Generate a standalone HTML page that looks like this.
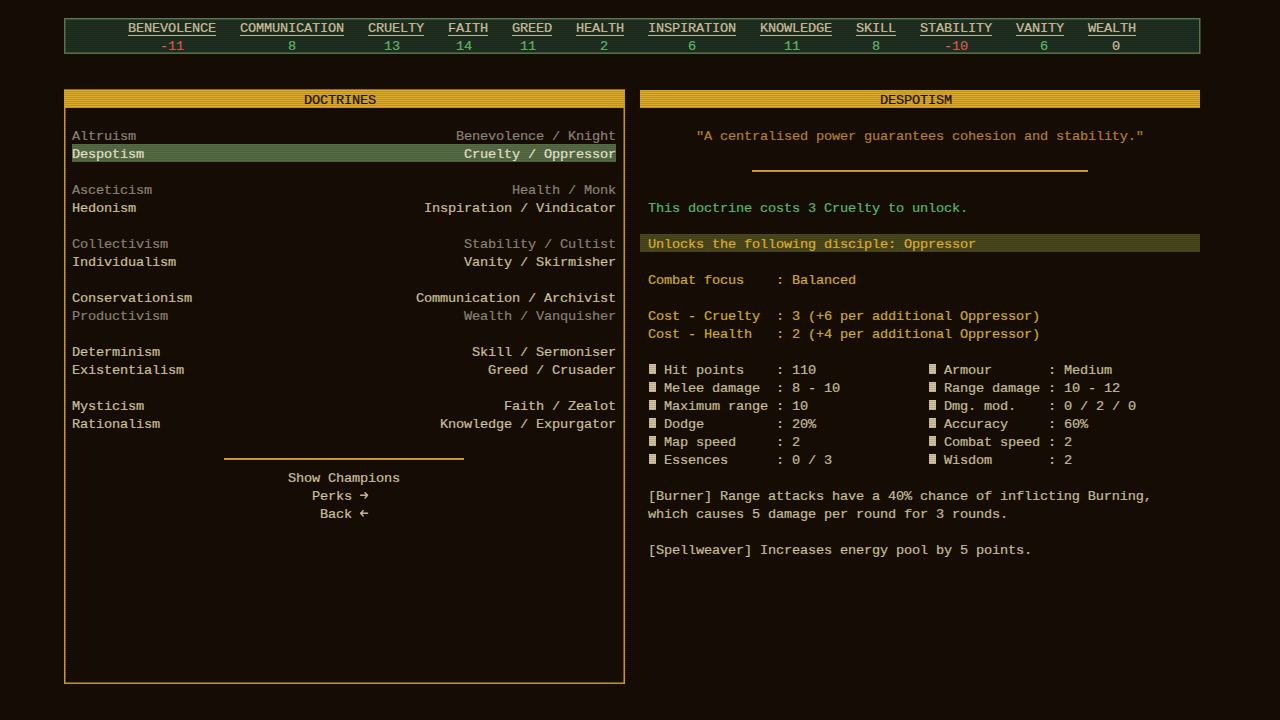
<!DOCTYPE html>
<html><head><meta charset="utf-8"><style>
html,body{margin:0;padding:0;width:1280px;height:720px;overflow:hidden;background:#160d04;}
body{position:relative;font-family:"Liberation Mono",monospace;font-size:13.6px;letter-spacing:-0.160px;line-height:18px;font-weight:normal;}
.t{position:absolute;white-space:pre;height:18px;padding-top:2px;-webkit-text-stroke:0.22px currentColor;}
.r{position:absolute;}
.scan{position:absolute;left:0;top:0;width:1280px;height:720px;background:repeating-linear-gradient(to bottom,rgba(0,0,0,0) 0px,rgba(0,0,0,0) 1px,rgba(0,0,0,0.12) 1px,rgba(0,0,0,0.12) 2px);pointer-events:none;}
</style></head><body>
<svg class="r" style="left:0;top:0" width="1280" height="720"><rect x="64.75" y="18.75" width="1135" height="34.5" fill="#1f2f21" stroke="#5d7b52" stroke-width="1.5"/></svg>
<div class="t" style="left:128px;top:18px;color:#d9c8a0;">BENEVOLENCE</div>
<div class="r" style="left:128px;top:35px;width:88px;height:1px;background:#d9c8a0;"></div>
<div class="t" style="left:160px;top:36px;color:#dc5f50;">-11</div>
<div class="t" style="left:240px;top:18px;color:#d9c8a0;">COMMUNICATION</div>
<div class="r" style="left:240px;top:35px;width:104px;height:1px;background:#d9c8a0;"></div>
<div class="t" style="left:288px;top:36px;color:#64bf69;">8</div>
<div class="t" style="left:368px;top:18px;color:#d9c8a0;">CRUELTY</div>
<div class="r" style="left:368px;top:35px;width:56px;height:1px;background:#d9c8a0;"></div>
<div class="t" style="left:384px;top:36px;color:#64bf69;">13</div>
<div class="t" style="left:448px;top:18px;color:#d9c8a0;">FAITH</div>
<div class="r" style="left:448px;top:35px;width:40px;height:1px;background:#d9c8a0;"></div>
<div class="t" style="left:456px;top:36px;color:#64bf69;">14</div>
<div class="t" style="left:512px;top:18px;color:#d9c8a0;">GREED</div>
<div class="r" style="left:512px;top:35px;width:40px;height:1px;background:#d9c8a0;"></div>
<div class="t" style="left:520px;top:36px;color:#64bf69;">11</div>
<div class="t" style="left:576px;top:18px;color:#d9c8a0;">HEALTH</div>
<div class="r" style="left:576px;top:35px;width:48px;height:1px;background:#d9c8a0;"></div>
<div class="t" style="left:600px;top:36px;color:#64bf69;">2</div>
<div class="t" style="left:648px;top:18px;color:#d9c8a0;">INSPIRATION</div>
<div class="r" style="left:648px;top:35px;width:88px;height:1px;background:#d9c8a0;"></div>
<div class="t" style="left:688px;top:36px;color:#64bf69;">6</div>
<div class="t" style="left:760px;top:18px;color:#d9c8a0;">KNOWLEDGE</div>
<div class="r" style="left:760px;top:35px;width:72px;height:1px;background:#d9c8a0;"></div>
<div class="t" style="left:784px;top:36px;color:#64bf69;">11</div>
<div class="t" style="left:856px;top:18px;color:#d9c8a0;">SKILL</div>
<div class="r" style="left:856px;top:35px;width:40px;height:1px;background:#d9c8a0;"></div>
<div class="t" style="left:872px;top:36px;color:#64bf69;">8</div>
<div class="t" style="left:920px;top:18px;color:#d9c8a0;">STABILITY</div>
<div class="r" style="left:920px;top:35px;width:72px;height:1px;background:#d9c8a0;"></div>
<div class="t" style="left:944px;top:36px;color:#dc5f50;">-10</div>
<div class="t" style="left:1016px;top:18px;color:#d9c8a0;">VANITY</div>
<div class="r" style="left:1016px;top:35px;width:48px;height:1px;background:#d9c8a0;"></div>
<div class="t" style="left:1040px;top:36px;color:#64bf69;">6</div>
<div class="t" style="left:1088px;top:18px;color:#d9c8a0;">WEALTH</div>
<div class="r" style="left:1088px;top:35px;width:48px;height:1px;background:#d9c8a0;"></div>
<div class="t" style="left:1112px;top:36px;color:#d9c8a0;">0</div>
<svg class="r" style="left:0;top:0" width="1280" height="720"><rect x="64.75" y="90" width="559.5" height="593.25" fill="none" stroke="#d4a22a" stroke-width="1.5"/></svg>
<div class="r" style="left:64px;top:90px;width:560px;height:18px;background:#daa928;"></div>
<div class="t" style="left:304px;top:90px;color:#1a1108;">DOCTRINES</div>
<div class="r" style="left:72px;top:144px;width:544px;height:18px;background:#556c44;"></div>
<div class="t" style="left:72px;top:126px;color:#918878;">Altruism</div>
<div class="t" style="left:456px;top:126px;color:#918878;">Benevolence / Knight</div>
<div class="t" style="left:72px;top:144px;color:#efe9d6;">Despotism</div>
<div class="t" style="left:464px;top:144px;color:#efe9d6;">Cruelty / Oppressor</div>
<div class="t" style="left:72px;top:180px;color:#918878;">Asceticism</div>
<div class="t" style="left:512px;top:180px;color:#918878;">Health / Monk</div>
<div class="t" style="left:72px;top:198px;color:#d9c8a0;">Hedonism</div>
<div class="t" style="left:424px;top:198px;color:#d9c8a0;">Inspiration / Vindicator</div>
<div class="t" style="left:72px;top:234px;color:#918878;">Collectivism</div>
<div class="t" style="left:464px;top:234px;color:#918878;">Stability / Cultist</div>
<div class="t" style="left:72px;top:252px;color:#d9c8a0;">Individualism</div>
<div class="t" style="left:464px;top:252px;color:#d9c8a0;">Vanity / Skirmisher</div>
<div class="t" style="left:72px;top:288px;color:#d9c8a0;">Conservationism</div>
<div class="t" style="left:416px;top:288px;color:#d9c8a0;">Communication / Archivist</div>
<div class="t" style="left:72px;top:306px;color:#918878;">Productivism</div>
<div class="t" style="left:464px;top:306px;color:#918878;">Wealth / Vanquisher</div>
<div class="t" style="left:72px;top:342px;color:#d9c8a0;">Determinism</div>
<div class="t" style="left:472px;top:342px;color:#d9c8a0;">Skill / Sermoniser</div>
<div class="t" style="left:72px;top:360px;color:#d9c8a0;">Existentialism</div>
<div class="t" style="left:488px;top:360px;color:#d9c8a0;">Greed / Crusader</div>
<div class="t" style="left:72px;top:396px;color:#d9c8a0;">Mysticism</div>
<div class="t" style="left:504px;top:396px;color:#d9c8a0;">Faith / Zealot</div>
<div class="t" style="left:72px;top:414px;color:#d9c8a0;">Rationalism</div>
<div class="t" style="left:440px;top:414px;color:#d9c8a0;">Knowledge / Expurgator</div>
<div class="r" style="left:224px;top:458px;width:240px;height:2px;background:#d4a22a;"></div>
<div class="t" style="left:288px;top:468px;color:#d9c8a0;">Show Champions</div>
<div class="t" style="left:312px;top:486px;color:#d9c8a0;">Perks</div>
<div class="t" style="left:320px;top:504px;color:#d9c8a0;">Back</div>
<svg class="r" style="left:0;top:0" width="1280" height="720"><g fill="none" stroke="#d9c8a0" stroke-width="1.4" stroke-linecap="round" stroke-linejoin="round"><path d="M360.6 495.3H367.6M365 492.7L367.6 495.3L365 497.9"/><path d="M360.6 513.3H367.6M363.2 510.7L360.6 513.3L363.2 515.9"/></g></svg>
<div class="r" style="left:640px;top:90px;width:560px;height:18px;background:#daa928;"></div>
<div class="t" style="left:880px;top:90px;color:#1a1108;">DESPOTISM</div>
<div class="t" style="left:696px;top:126px;color:#bf8436;">"A centralised power guarantees cohesion and stability."</div>
<div class="r" style="left:752px;top:170px;width:336px;height:2px;background:#d4a22a;"></div>
<div class="t" style="left:648px;top:198px;color:#64bf69;">This doctrine costs 3 Cruelty to unlock.</div>
<div class="r" style="left:640px;top:234px;width:560px;height:18px;background:#4a481c;"></div>
<div class="t" style="left:648px;top:234px;color:#e4b732;">Unlocks the following disciple: Oppressor</div>
<div class="t" style="left:648px;top:270px;color:#dcb234;">Combat focus    : Balanced</div>
<div class="t" style="left:648px;top:306px;color:#dcb234;">Cost - Cruelty  : 3 (+6 per additional Oppressor)</div>
<div class="t" style="left:648px;top:324px;color:#dcb234;">Cost - Health   : 2 (+4 per additional Oppressor)</div>
<div class="r" style="left:649px;top:364px;width:7px;height:9.5px;background:#d2c49f;"></div>
<div class="t" style="left:664px;top:360px;color:#d2c49f;">Hit points    : 110</div>
<div class="r" style="left:929px;top:364px;width:7px;height:9.5px;background:#d2c49f;"></div>
<div class="t" style="left:944px;top:360px;color:#d2c49f;">Armour       : Medium</div>
<div class="r" style="left:649px;top:382px;width:7px;height:9.5px;background:#d2c49f;"></div>
<div class="t" style="left:664px;top:378px;color:#d2c49f;">Melee damage  : 8 - 10</div>
<div class="r" style="left:929px;top:382px;width:7px;height:9.5px;background:#d2c49f;"></div>
<div class="t" style="left:944px;top:378px;color:#d2c49f;">Range damage : 10 - 12</div>
<div class="r" style="left:649px;top:400px;width:7px;height:9.5px;background:#d2c49f;"></div>
<div class="t" style="left:664px;top:396px;color:#d2c49f;">Maximum range : 10</div>
<div class="r" style="left:929px;top:400px;width:7px;height:9.5px;background:#d2c49f;"></div>
<div class="t" style="left:944px;top:396px;color:#d2c49f;">Dmg. mod.    : 0 / 2 / 0</div>
<div class="r" style="left:649px;top:418px;width:7px;height:9.5px;background:#d2c49f;"></div>
<div class="t" style="left:664px;top:414px;color:#d2c49f;">Dodge         : 20%</div>
<div class="r" style="left:929px;top:418px;width:7px;height:9.5px;background:#d2c49f;"></div>
<div class="t" style="left:944px;top:414px;color:#d2c49f;">Accuracy     : 60%</div>
<div class="r" style="left:649px;top:436px;width:7px;height:9.5px;background:#d2c49f;"></div>
<div class="t" style="left:664px;top:432px;color:#d2c49f;">Map speed     : 2</div>
<div class="r" style="left:929px;top:436px;width:7px;height:9.5px;background:#d2c49f;"></div>
<div class="t" style="left:944px;top:432px;color:#d2c49f;">Combat speed : 2</div>
<div class="r" style="left:649px;top:454px;width:7px;height:9.5px;background:#d2c49f;"></div>
<div class="t" style="left:664px;top:450px;color:#d2c49f;">Essences      : 0 / 3</div>
<div class="r" style="left:929px;top:454px;width:7px;height:9.5px;background:#d2c49f;"></div>
<div class="t" style="left:944px;top:450px;color:#d2c49f;">Wisdom       : 2</div>
<div class="t" style="left:648px;top:486px;color:#d2c49f;">[Burner] Range attacks have a 40% chance of inflicting Burning,</div>
<div class="t" style="left:648px;top:504px;color:#d2c49f;">which causes 5 damage per round for 3 rounds.</div>
<div class="t" style="left:648px;top:540px;color:#d2c49f;">[Spellweaver] Increases energy pool by 5 points.</div>
<div class="scan"></div>
</body></html>
